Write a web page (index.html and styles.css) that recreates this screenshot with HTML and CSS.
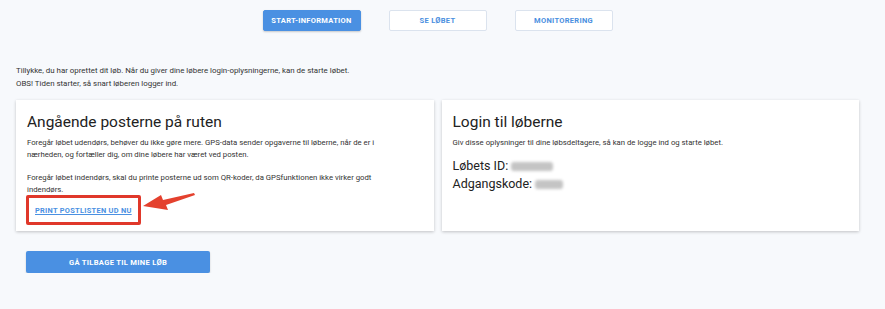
FILE: index.html
```html
<!DOCTYPE html>
<html lang="da">

<head>
    <meta charset="UTF-8">
    <meta name="viewport" content="width=device-width, initial-scale=1.0">
    <title>Start-information</title>
    <link rel="stylesheet" href="styles.css">
</head>

<body>
    <div class="page">
        <!-- Faner -->
        <nav class="tabs">
            <button class="tab active">Start-information</button>
            <button class="tab">Se løbet</button>
            <button class="tab">Monitorering</button>
        </nav>

        <div class="intro">
            <p>Tillykke, du har oprettet dit løb. Når du giver dine løbere login-oplysningerne, kan de starte løbet.</p>
            <p>OBS! Tiden starter, så snart løberen logger ind.</p>
        </div>

        <div class="cards">
            <div class="card">
                <h2>Angående posterne på ruten</h2>
                <p>Foregår løbet udendørs, behøver du ikke gøre mere. GPS-data sender opgaverne til løberne, når de er i nærheden, og fortæller dig, om dine løbere har været ved posten.</p>
                <p>Foregår løbet indendørs, skal du printe posterne ud som QR-koder, da GPSfunktionen ikke virker godt indendørs.</p>
                <div class="print-box">
                    <a class="print-link" href="#">Print postlisten ud nu</a>
                </div>
                <!-- Pil (markering) -->
                <svg class="arrow" width="60" height="24" viewBox="0 0 60 24">
                    <path d="M52 1 L53 3 L24 13 L26 18 L1 14 L19 3 L21 8 Z" fill="#e4412e" />
                </svg>
            </div>

            <div class="card">
                <h2>Login til løberne</h2>
                <p class="small">Giv disse oplysninger til dine løbsdeltagere, så kan de logge ind og starte løbet.</p>
                <div class="login-line">Løbets ID: <span class="blur wide"></span></div>
                <div class="login-line">Adgangskode: <span class="blur"></span></div>
            </div>
        </div>

        <button class="back-button">Gå tilbage til mine løb</button>
    </div>
</body>

</html>
```

FILE: styles.css
```css
body {
    font-family: 'Roboto', 'Liberation Sans', sans-serif;
    background-color: #f7f9fc;
    color: #333;
    margin: 0;
    padding: 0;
}

.page {
    padding: 10px 26px 0 16px;
}

.tabs {
    display: flex;
    justify-content: center;
    gap: 28px;
}

.tab {
    width: 98px;
    height: 21px;
    padding: 0;
    background-color: #fff;
    border: 1px solid #dbe3ee;
    border-radius: 2px;
    color: #4a8fe0;
    font-family: inherit;
    font-size: 7.5px;
    font-weight: 700;
    letter-spacing: 0.3px;
    text-transform: uppercase;
    cursor: pointer;
}

.tab.active {
    background-color: #4a90e2;
    border-color: #4a90e2;
    color: #fff;
    box-shadow: 0 1px 2px rgba(0, 0, 0, 0.2);
}

.intro {
    margin-top: 33px;
    font-size: 7.9px;
    line-height: 13px;
    color: #333;
}

.intro p {
    margin: 0;
}

.cards {
    display: flex;
    gap: 8px;
    margin-top: 10px;
}

.card {
    position: relative;
    flex: 1;
    height: 131px;
    box-sizing: border-box;
    background-color: #fff;
    padding: 12px 11px 0;
    box-shadow: 0 1px 3px rgba(0, 0, 0, 0.22);
}

.card h2 {
    margin: 0 0 5px;
    font-size: 15.5px;
    font-weight: 400;
    line-height: 20px;
    color: #222;
}

.card p {
    max-width: 375px;
    margin: 0 0 12px;
    font-size: 7.75px;
    line-height: 11.5px;
    color: #333;
}

.card p.small {
    max-width: none;
    margin-bottom: 8px;
}

.print-box {
    width: fit-content;
    margin-top: -12px;
    margin-left: -1px;
    padding: 7px 6px 6px;
    border: 3px solid #e0382a;
    border-radius: 2px;
}

.print-link {
    display: block;
    font-size: 7.4px;
    font-weight: 700;
    letter-spacing: 0.3px;
    text-transform: uppercase;
    color: #4a90e2;
    line-height: 11px;
}

.arrow {
    position: absolute;
    left: 126px;
    top: 92px;
}

.login-line {
    font-size: 12.5px;
    line-height: 18px;
    color: #222;
}

.blur {
    display: inline-block;
    width: 28px;
    height: 9px;
    vertical-align: -1px;
    background-color: #c4c4c4;
    border-radius: 3px;
    filter: blur(1.5px);
}

.blur.wide {
    width: 42px;
}

.back-button {
    display: block;
    margin: 20px 0 0 10px;
    width: 184px;
    height: 22px;
    background-color: #4a90e2;
    color: #fff;
    border: none;
    border-radius: 2px;
    font-family: inherit;
    font-size: 7.6px;
    font-weight: 700;
    letter-spacing: 0.3px;
    text-transform: uppercase;
    box-shadow: 0 1px 2px rgba(0, 0, 0, 0.2);
    cursor: pointer;
}
```
